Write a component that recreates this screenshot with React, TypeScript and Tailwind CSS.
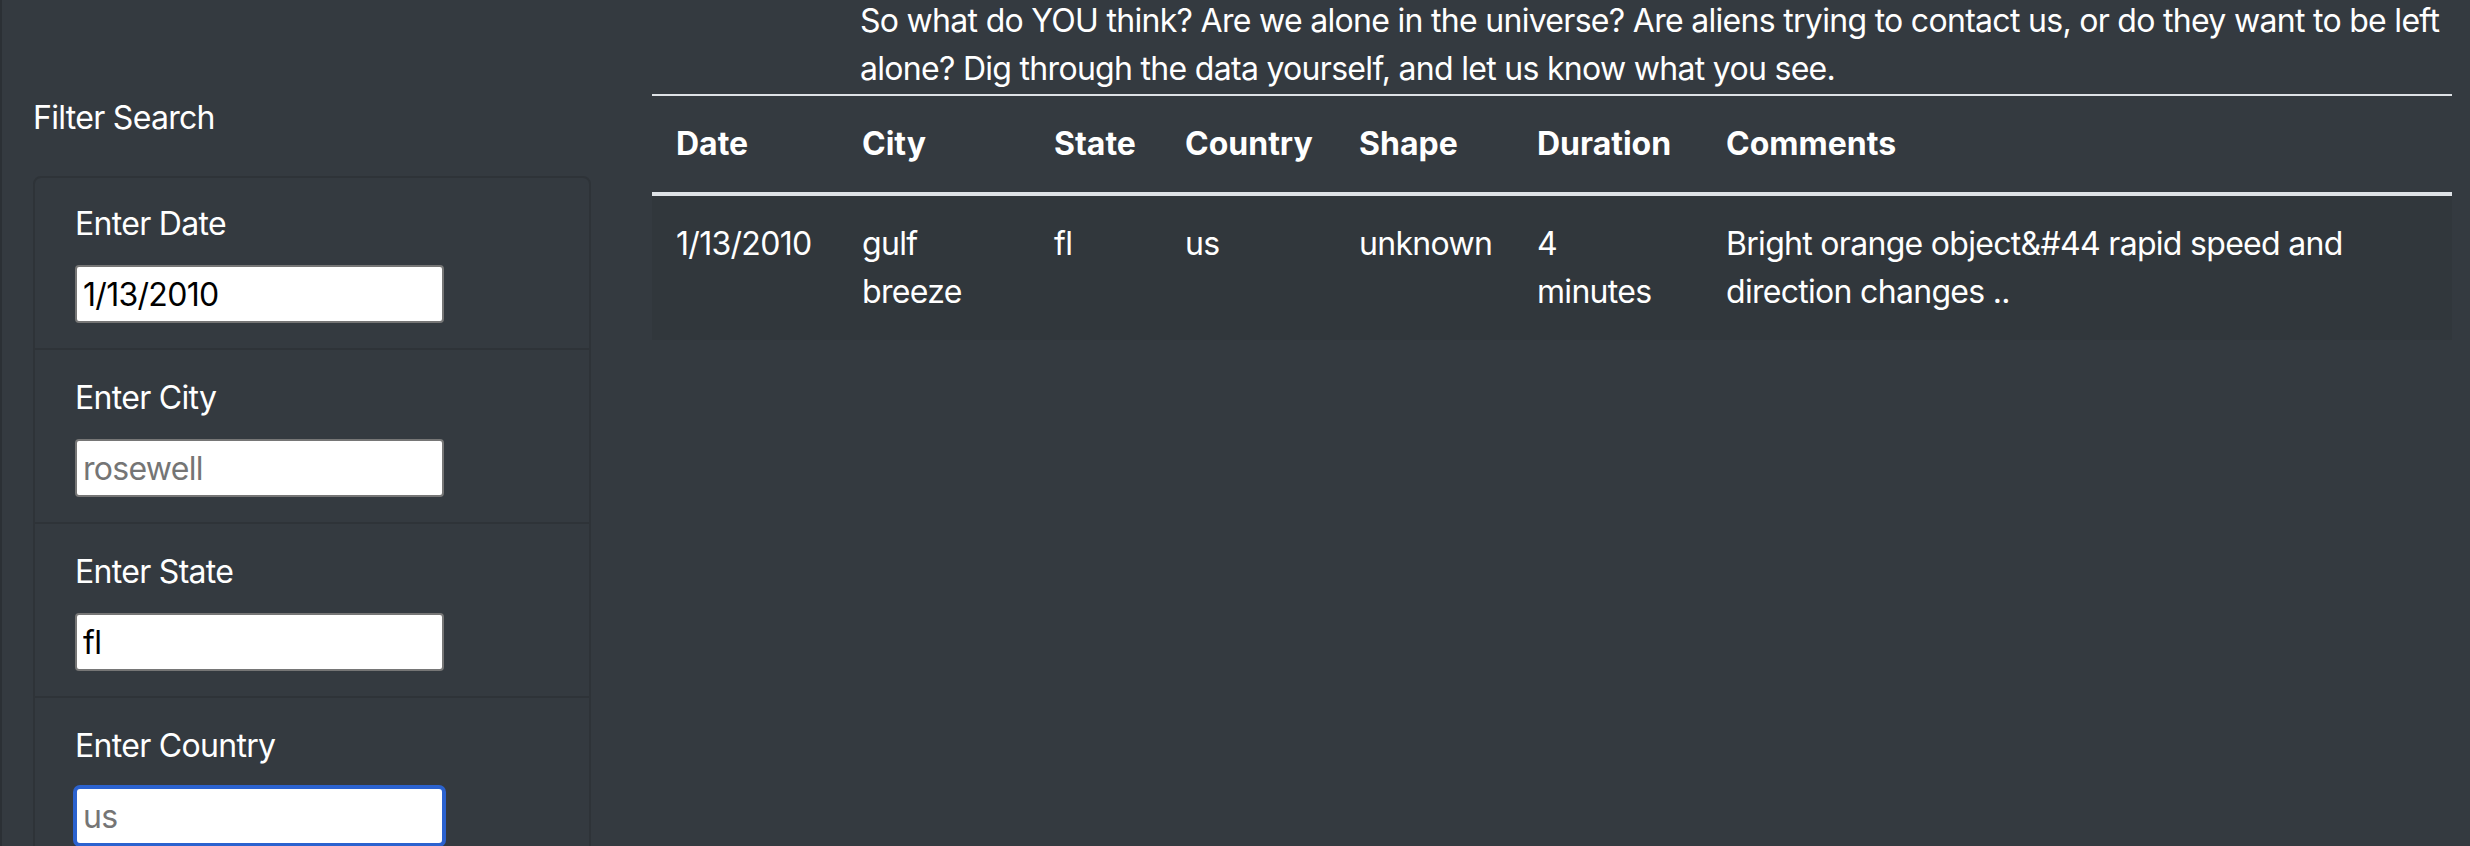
import React from "react";

const cols = [
  { label: "Date", w: "w-[186px]" },
  { label: "City", w: "w-[192px]" },
  { label: "State", w: "w-[131px]" },
  { label: "Country", w: "w-[174px]" },
  { label: "Shape", w: "w-[178px]" },
  { label: "Duration", w: "w-[189px]" },
  { label: "Comments", w: "w-[750px]" },
];

const row = ["1/13/2010", "gulf breeze", "fl", "us", "unknown", "4 minutes", "Bright orange object&#44 rapid speed and direction changes .."];

function Field({
  label,
  value,
  placeholder,
  focused,
  first,
}: {
  label: string;
  value?: string;
  placeholder?: string;
  focused?: boolean;
  first?: boolean;
}) {
  return (
    <div className={`px-[40px] pb-[25px] ${first ? "pt-[22px]" : "pt-[24px]"}`}>
      <div className="h-[48px]">{label}</div>
      <input
        readOnly
        value={value ?? ""}
        placeholder={placeholder}
        className={`mt-[17px] block w-[369px] h-[58px] bg-white text-black text-[32px] tracking-[-0.7px] px-[6px] outline-none placeholder:text-[#757575] ${
          focused
            ? "border-2 border-[#2b62cf] rounded-[5px] shadow-[0_0_0_2px_#2b62cf]"
            : "border-2 border-[#767676] rounded-[4px]"
        }`}
        style={{ fontFamily: "Inter, 'Noto Sans', sans-serif" }}
      />
    </div>
  );
}

export default function App() {
  return (
    <div className="h-[846px] w-[2470px] overflow-hidden bg-[#343a40] flex text-white text-[32px] leading-[48px] tracking-[-0.7px] font-['Inter','Noto_Sans',sans-serif]">
      <div className="w-[2px] shrink-0 bg-[#2b3035]" />
      <div className="w-[616px] shrink-0 pl-[31px] pt-[94px]">
        <div className="h-[48px]">Filter Search</div>
        <div className="mt-[34px] w-[558px] border-2 border-[#2e3338] rounded-[8px] divide-y-2 divide-[#2e3338]">
          <Field label="Enter Date" value="1/13/2010" first />
          <Field label="Enter City" placeholder="rosewell" />
          <Field label="Enter State" value="fl" />
          <Field label="Enter Country" placeholder="us" focused />
        </div>
      </div>
      <div className="ml-[34px] w-[1800px] shrink-0">
        <p className="ml-[208px] mr-[-14px] mt-[-3px] mb-[1px]">
          So what do YOU think? Are we alone in the universe? Are aliens trying to contact us, or do they want to be left alone? Dig through the data yourself, and let us know what you see.
        </p>
        <table className="w-full table-fixed border-separate border-spacing-0">
          <thead>
            <tr>
              {cols.map((c) => (
                <th
                  key={c.label}
                  className={`${c.w} border-t-2 border-b-4 border-[#dee2e6] p-[24px] text-left font-bold tracking-normal align-bottom`}
                >
                  {c.label}
                </th>
              ))}
            </tr>
          </thead>
          <tbody>
            <tr className="bg-[#31373c]">
              {row.map((v, i) => (
                <td key={i} className="p-[24px] align-top">
                  {v}
                </td>
              ))}
            </tr>
          </tbody>
        </table>
      </div>
    </div>
  );
}
